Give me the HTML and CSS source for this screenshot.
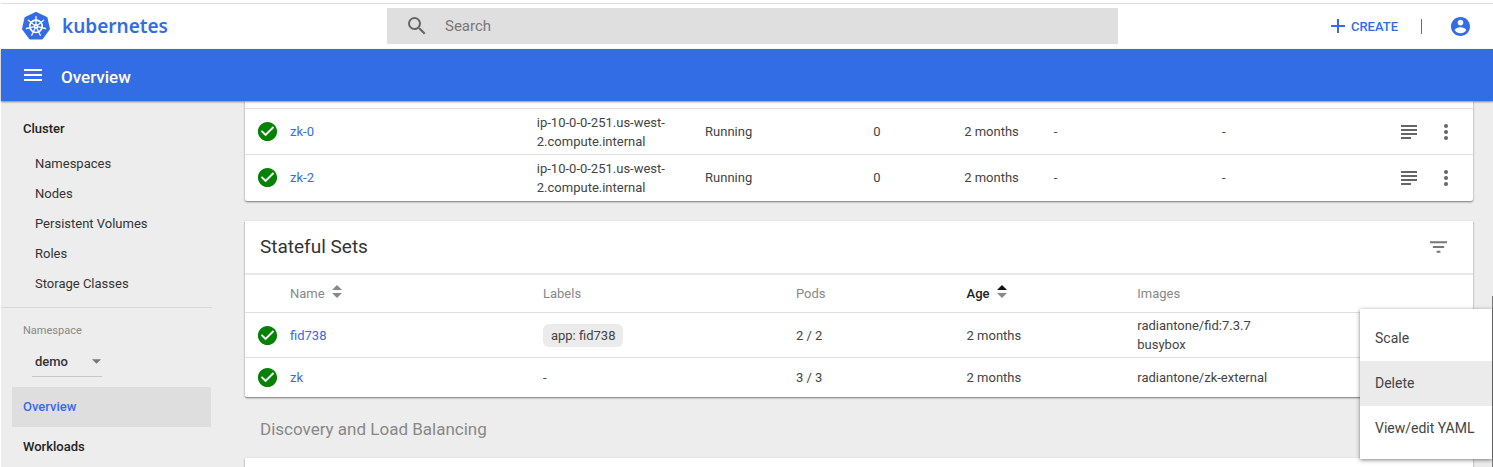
FILE: index.html
```html
<!DOCTYPE html>
<html lang="en">
<head>
<meta charset="utf-8">
<title>Kubernetes Dashboard</title>
<link rel="stylesheet" href="styles.css">
</head>
<body>
<svg class="defs" aria-hidden="true">
  <symbol id="ok" viewBox="0 0 24 24"><path d="M12 2C6.480 2 2 6.480 2 12s4.480 10 10 10 10-4.480 10-10S17.520 2 12 2zm-2 15l-5-5 1.410-1.410L10 14.170l7.590-7.590L19 8l-9 9z"/></symbol>
  <symbol id="logs" viewBox="0 0 16 14"><path d="M0 0h16v2H0zM0 4h16v2H0zM0 8h16v2H0zM0 12h10v2H0z"/></symbol>
  <symbol id="more" viewBox="0 0 4 16"><circle cx="2" cy="2" r="2"/><circle cx="2" cy="8" r="2"/><circle cx="2" cy="14" r="2"/></symbol>
  <symbol id="sort" viewBox="0 0 10 14"><path d="M5 0l5 5H0z"/><path d="M5 13L0 8h10z"/></symbol>
</svg>
<header class="topbar">
  <a class="brand" href="#">
    <svg class="brand-logo" viewBox="0 0 30 30" aria-hidden="true">
      <path class="hept" d="M15 2L25.500 7L28 18L21 27.500H9L2 18L4.500 7z"/>
      <g class="wheel">
        <circle cx="15" cy="15.300" r="6.200"/>
        <circle cx="15" cy="15.300" r="1.500"/>
        <path class="spokes" d="M15 14V5.600M16.200 14.400L22.700 9.300M16.500 15.700L24.500 17.500M15.700 16.700L19.300 24.200M14.300 16.700L10.700 24.200M13.500 15.700L5.500 17.500M13.800 14.400L7.300 9.300"/>
      </g>
    </svg>
    <span>kubernetes</span>
  </a>
  <label class="search">
    <svg class="icon-search" viewBox="0 0 24 24" aria-hidden="true"><path d="M15.500 14h-.79l-.28-.27A6.471 6.471 0 0 0 16 9.500 6.500 6.500 0 1 0 9.500 16c1.610 0 3.090-.59 4.230-1.570l.27.28v.79l5 4.990L20.490 19l-4.990-5zm-6 0C7.010 14 5 11.990 5 9.500S7.010 5 9.500 5 14 7.010 14 9.500 11.990 14 9.500 14z"/></svg>
    <input type="search" placeholder="Search" aria-label="Search">
  </label>
  <div class="actions">
    <button class="create" type="button"><svg viewBox="0 0 14 14" aria-hidden="true"><path d="M7 0v14M0 7h14"/></svg>CREATE</button>
    <span class="divider"></span>
    <button class="account" type="button" aria-label="Account"><svg viewBox="2 2 20 20" aria-hidden="true"><path d="M12 2C6.480 2 2 6.480 2 12s4.480 10 10 10 10-4.480 10-10S17.520 2 12 2zm0 3c1.660 0 3 1.340 3 3s-1.340 3-3 3-3-1.340-3-3 1.340-3 3-3zm0 14.200c-2.500 0-4.710-1.280-6-3.220.03-1.990 4-3.080 6-3.080 1.990 0 5.970 1.090 6 3.080-1.290 1.940-3.500 3.220-6 3.220z"/></svg></button>
  </div>
</header>
<div class="titlebar">
  <button class="burger" type="button" aria-label="Menu"><svg viewBox="0 0 18 12" aria-hidden="true"><path d="M0 0h18v2H0zM0 5h18v2H0zM0 10h18v2H0z"/></svg></button>
  <h1>Overview</h1>
</div>
<div class="body">
  <nav class="sidebar">
    <a class="group" href="#">Cluster</a>
    <div class="links">
      <a href="#">Namespaces</a>
      <a href="#">Nodes</a>
      <a href="#">Persistent Volumes</a>
      <a href="#">Roles</a>
      <a href="#">Storage Classes</a>
    </div>
    <div class="namespace">
      <label for="ns">Namespace</label>
      <div class="select-wrap">
        <select id="ns"><option>demo</option></select>
        <svg viewBox="0 0 10 5" aria-hidden="true"><path d="M0 0h10L5 5z"/></svg>
      </div>
    </div>
    <a class="group active" href="#">Overview</a>
    <a class="group" href="#">Workloads</a>
  </nav>
  <main class="content">
    <section class="card pods">
      <table>
        <colgroup><col class="c-icon"><col class="p-name"><col class="p-node"><col class="p-status"><col class="p-restarts"><col class="p-age"><col class="p-cpu"><col class="p-mem"><col class="c-act"></colgroup>
        <tbody>
          <tr>
            <td class="state"><svg><use href="#ok"/></svg></td>
            <td><a href="#">zk-0</a></td>
            <td>ip-10-0-0-251.us-west-<br>2.compute.internal</td>
            <td>Running</td><td>0</td><td>2 months</td><td>-</td><td>-</td>
            <td><div class="row-actions"><button type="button" aria-label="Logs"><svg class="logs"><use href="#logs"/></svg></button><button type="button" aria-label="More"><svg class="more"><use href="#more"/></svg></button></div></td>
          </tr>
          <tr>
            <td class="state"><svg><use href="#ok"/></svg></td>
            <td><a href="#">zk-2</a></td>
            <td>ip-10-0-0-251.us-west-<br>2.compute.internal</td>
            <td>Running</td><td>0</td><td>2 months</td><td>-</td><td>-</td>
            <td><div class="row-actions"><button type="button" aria-label="Logs"><svg class="logs"><use href="#logs"/></svg></button><button type="button" aria-label="More"><svg class="more"><use href="#more"/></svg></button></div></td>
          </tr>
        </tbody>
      </table>
    </section>
    <section class="card sets">
      <div class="card-head">
        <h2>Stateful Sets</h2>
        <button type="button" aria-label="Filter"><svg viewBox="0 0 18 12" aria-hidden="true"><path d="M7 12h4v-2H7v2zM0 0v2h18V0H0zm3 7h12V5H3v2z"/></svg></button>
      </div>
      <table>
        <colgroup><col class="c-icon"><col class="s-name"><col class="s-labels"><col class="s-pods"><col class="s-age"><col></colgroup>
        <thead>
          <tr><th></th><th>Name<svg class="sort"><use href="#sort"/></svg></th><th>Labels</th><th>Pods</th><th class="sorted">Age<svg class="sort" viewBox="0 0 10 14"><path class="up" d="M5 0l5 5H0z"/><path d="M5 13L0 8h10z"/></svg></th><th>Images</th></tr>
        </thead>
        <tbody>
          <tr>
            <td class="state"><svg><use href="#ok"/></svg></td>
            <td><a href="#">fid738</a></td>
            <td><span class="chip">app: fid738</span></td>
            <td>2 / 2</td><td>2 months</td><td>radiantone/fid:7.3.7<br>busybox</td>
          </tr>
          <tr class="short">
            <td class="state"><svg><use href="#ok"/></svg></td>
            <td><a href="#">zk</a></td>
            <td>-</td><td>3 / 3</td><td>2 months</td><td>radiantone/zk-external</td>
          </tr>
        </tbody>
      </table>
    </section>
    <h2 class="section-title">Discovery and Load Balancing</h2>
    <section class="card next"></section>
  </main>
</div>
<div class="menu" role="menu">
  <button type="button" role="menuitem">Scale</button>
  <button class="hover" type="button" role="menuitem">Delete</button>
  <button type="button" role="menuitem">View/edit YAML</button>
</div>
<div class="scroll-edge"></div>
</body>
</html>
```

FILE: styles.css
```css
* { box-sizing: border-box; }
html { height: 100%; background: #fff; }
body {
  position: relative;
  display: flex;
  flex-direction: column;
  height: 100vh;
  margin: 0;
  padding: 3px 0 0 1px;
  overflow: hidden;
  font: 13px/19px Roboto, sans-serif;
  color: #444;
}
a { color: #326de6; text-decoration: none; }
button { display: inline-flex; align-items: center; padding: 0; border: 0; background: none; font: inherit; color: inherit; }
svg { display: block; fill: currentColor; }
.defs { display: none; }

.topbar { display: flex; flex: none; align-items: center; height: 46px; padding-bottom: 1px; border-top: 1px solid #ddd; background: #fff; }
.brand { display: flex; align-items: center; gap: 11px; width: 386px; padding-left: 20px; font: 600 19px/24px "Noto Sans", sans-serif; }
.brand-logo { width: 30px; height: 30px; }
.hept { fill: #326de6; stroke: #326de6; stroke-width: 2; stroke-linejoin: round; }
.wheel { fill: none; stroke: #fff; stroke-width: 1.6; }
.spokes { stroke-width: 1.3; stroke-linecap: round; }
.search { display: flex; flex: 1; align-items: center; gap: 16px; height: 36px; padding-left: 18px; background: #dfdfdf; color: #666; }
.icon-search { width: 24px; height: 24px; }
.search input { flex: 1; min-width: 0; padding: 0; border: 0; outline: 0; background: none; font: 15px/20px Roboto, sans-serif; }
.search input::placeholder { color: #777; opacity: 1; }
.actions { display: flex; align-items: center; justify-content: flex-end; width: 375px; padding-right: 23px; color: #326de6; }
.create { gap: 6px; font-weight: 500; }
.create svg { width: 14px; height: 14px; fill: none; stroke: currentColor; stroke-width: 2; }
.divider { width: 1px; height: 15px; margin: 0 29px 0 23px; background: #8c5a9c; }
.account svg { width: 19px; height: 19px; }

.titlebar { position: relative; z-index: 1; display: flex; flex: none; align-items: center; gap: 19px; height: 52px; padding: 0 23px; background: #326de6; box-shadow: 0 1px 2px rgba(0,0,0,.45); color: #fff; }
.burger svg { width: 18px; height: 12px; }
h1 { margin: 4px 0 0; font: 500 17px/24px Roboto, sans-serif; }

.body { display: flex; flex: 1; min-height: 0; overflow: hidden; background: #ededed; }
.sidebar { width: 211px; flex: none; padding-top: 8px; }
.sidebar a { color: #333; }
.sidebar .group { display: block; margin: 0 1px 0 11px; padding: 0 11px; line-height: 40px; font-weight: 500; color: #222; }
.sidebar .active { background: #dedede; color: #326de6; }
.links { display: flex; flex-direction: column; padding: 0 0 8px 34px; border-bottom: 1px solid #d8d8d8; line-height: 30px; }
.namespace { height: 79px; padding: 13px 22px 0; color: #888; font-size: 11px; }
.namespace label { display: block; }
.select-wrap { display: flex; align-items: center; width: 70px; height: 30px; margin: 7px 0 0 9px; padding: 0 1px 0 3px; border-bottom: 1px solid #c8c8c8; }
.select-wrap select { flex: 1; min-width: 0; padding: 0; border: 0; appearance: none; background: none; font: 500 13px/19px Roboto, sans-serif; color: #333; }
.select-wrap svg { width: 9px; height: 5px; color: #777; }

.content { flex: 1; min-width: 0; padding: 0 20px 0 33px; }
.card { background: #fff; border-radius: 0 0 2px 2px; box-shadow: 0 1px 2px rgba(0,0,0,.5); }
.pods { padding-top: 7px; }
table { width: 100%; border-collapse: collapse; table-layout: fixed; }
td, th { padding: 0; border-top: 1px solid #e0e0e0; text-align: left; vertical-align: middle; }
tr { height: 46px; }
.sets tbody tr { height: 45px; }
.sets tbody .short { height: 39px; }
.c-icon { width: 45px; }
.p-name { width: 20.100%; }
.p-node { width: 13.700%; }
.p-status { width: 13.700%; }
.p-restarts { width: 7.400%; }
.p-age { width: 7.300%; }
.p-cpu { width: 13.700%; }
.c-act { width: 72px; }
.s-name { width: 20.600%; }
.s-labels { width: 20.600%; }
.s-pods { width: 13.900%; }
.s-age { width: 13.900%; }
.state svg { width: 23px; height: 23px; margin-left: 11px; color: #048204; }
.row-actions { display: flex; align-items: center; gap: 27px; color: #666; }
.logs { width: 16px; height: 14px; }
.more { width: 4px; height: 16px; }

.sets { margin-top: 20px; }
.card-head { display: flex; align-items: center; justify-content: space-between; height: 52px; padding: 0 26px 0 15px; color: #777; }
.card-head svg { width: 17px; height: 12px; }
h2 { margin: 0; font: 19px/24px Roboto, sans-serif; color: #333; }
.sets thead tr { height: 39px; }
.sets thead th { border-top: 2px solid #e8e8e8; font-weight: 400; color: #888; }
.sort { display: inline-block; width: 10px; height: 14px; margin-left: 7px; vertical-align: -1px; color: #888; }
.sets thead .sorted { font-weight: 500; color: #222; }
.sorted .up { fill: #111; }
.chip { display: inline-block; padding: 2px 8px; border-radius: 6px; background: #ebebeb; }
.content .section-title { padding: 20px 15px 17px; font-size: 17px; color: #888; }
.next { height: 60px; }

.menu { position: absolute; z-index: 2; top: 309px; right: 1px; width: 132px; padding: 7px 0 8px; background: #fff; box-shadow: 0 1px 4px rgba(0,0,0,.5); }
.menu button { display: block; width: 100%; height: 45px; padding: 0 15px; text-align: left; font-size: 14px; white-space: nowrap; }
.menu .hover { background: #ebebeb; }
.scroll-edge { position: absolute; top: 296px; right: 0; bottom: 0; width: 1px; background: #777; }
```
